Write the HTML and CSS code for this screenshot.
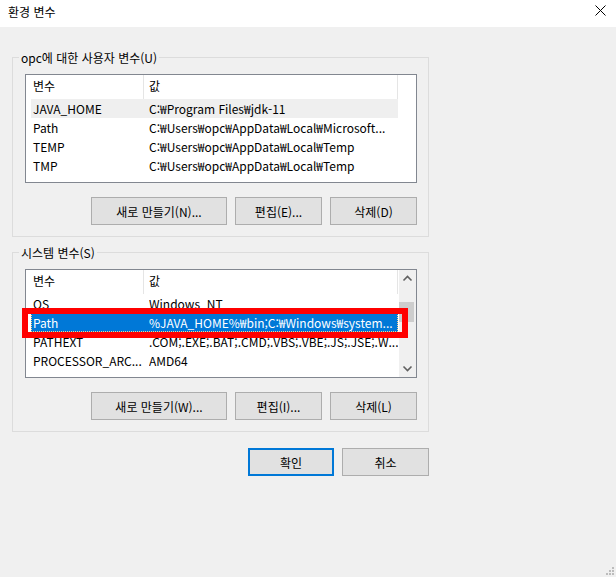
FILE: index.html
```html
<!DOCTYPE html>
<html lang="ko">
<head>
<meta charset="utf-8">
<title>환경 변수</title>
<link rel="stylesheet" href="styles.css">
</head>
<body>
<header class="titlebar">
  <span class="title">환경 변수</span>
  <svg class="close" width="11" height="11" viewBox="0 0 11 11"><path d="M0.5 0.5 L10.5 10.5 M10.5 0.5 L0.5 10.5" stroke="#000" stroke-width="1" fill="none"/></svg>
</header>
<main class="dialog">
  <section class="group">
    <div class="group-title">opc에 대한 사용자 변수(U)</div>
    <div class="listbox">
      <div class="list-main">
        <div class="list-header"><div class="h1">변수</div><div class="h2">값</div></div>
        <div class="row hover"><span class="c1">JAVA_HOME</span><span class="c2">C:₩Program Files₩jdk-11</span></div>
        <div class="row"><span class="c1">Path</span><span class="c2">C:₩Users₩opc₩AppData₩Local₩Microsoft...</span></div>
        <div class="row"><span class="c1">TEMP</span><span class="c2">C:₩Users₩opc₩AppData₩Local₩Temp</span></div>
        <div class="row"><span class="c1">TMP</span><span class="c2">C:₩Users₩opc₩AppData₩Local₩Temp</span></div>
      </div>
    </div>
    <div class="buttons">
      <button class="btn wide">새로 만들기(N)...</button>
      <button class="btn">편집(E)...</button>
      <button class="btn">삭제(D)</button>
    </div>
  </section>

  <section class="group second">
    <div class="group-title">시스템 변수(S)</div>
    <div class="listbox">
      <div class="list-main">
        <div class="list-header"><div class="h1">변수</div><div class="h2">값</div></div>
        <div class="row"><span class="c1">OS</span><span class="c2">Windows_NT</span></div>
        <div class="row selected"><span class="c1">Path</span><span class="c2">%JAVA_HOME%₩bin;C:₩Windows₩system...</span></div>
        <div class="row"><span class="c1">PATHEXT</span><span class="c2">.COM;.EXE;.BAT;.CMD;.VBS;.VBE;.JS;.JSE;.W...</span></div>
        <div class="row"><span class="c1">PROCESSOR_ARC...</span><span class="c2">AMD64</span></div>
        <div class="row"></div>
      </div>
      <div class="scrollbar">
        <div class="sb-btn"><svg width="17" height="17" viewBox="0 0 17 17"><path d="M4.5 10.5 L8.5 6.5 L12.5 10.5" stroke="#606060" stroke-width="1.6" fill="none"/></svg></div>
        <div class="sb-track"><div class="sb-thumb"></div></div>
        <div class="sb-btn"><svg width="17" height="17" viewBox="0 0 17 17"><path d="M4.5 6.5 L8.5 10.5 L12.5 6.5" stroke="#606060" stroke-width="1.6" fill="none"/></svg></div>
      </div>
    </div>
    <div class="buttons">
      <button class="btn wide">새로 만들기(W)...</button>
      <button class="btn">편집(I)...</button>
      <button class="btn">삭제(L)</button>
    </div>
    <div class="annotation"></div>
  </section>

  <div class="dialog-buttons">
    <button class="btn default">확인</button>
    <button class="btn">취소</button>
  </div>
</main>
<svg class="grip" width="10" height="10" viewBox="0 0 10 10">
  <rect x="7" y="1" width="2" height="2" fill="#bcbcbc"/>
  <rect x="4" y="4" width="2" height="2" fill="#bcbcbc"/>
  <rect x="7" y="4" width="2" height="2" fill="#bcbcbc"/>
  <rect x="1" y="7" width="2" height="2" fill="#bcbcbc"/>
  <rect x="4" y="7" width="2" height="2" fill="#bcbcbc"/>
  <rect x="7" y="7" width="2" height="2" fill="#bcbcbc"/>
</svg>
</body>
</html>
```

FILE: styles.css
```css
* { box-sizing: border-box; }
html, body { margin: 0; padding: 0; }
body {
  background: #f0f0f0;
  min-height: 100vh;
  font-family: "Noto Sans CJK KR", "Noto Sans", sans-serif;
  font-size: 12px;
  color: #000;
  position: relative;
}
.titlebar {
  height: 27px;
  background: #fff;
  display: flex;
  align-items: center;
  justify-content: space-between;
  padding: 0 10px 3px 8px;
}
.title { font-size: 12px; line-height: 16px; }
.close { align-self: flex-start; margin-top: 5px; }

.dialog {
  width: 429px;
  padding: 30px 0 0 12px;
  display: flex;
  flex-direction: column;
}
.group {
  position: relative;
  width: 417px;
  border: 1px solid #dcdcdc;
  padding: 0 11px 11px 12px;
  display: flex;
  flex-direction: column;
}
.group.second { margin-top: 15px; }
.group-title {
  align-self: flex-start;
  height: 16px;
  line-height: 16px;
  margin: -8px 0 0 -6px;
  padding: 0 2px;
  background: #f0f0f0;
  white-space: nowrap;
}
.listbox {
  margin-top: 8px;
  height: 109px;
  border: 1px solid #828790;
  background: #fff;
  display: flex;
  overflow: hidden;
}
.list-main { flex: 1; overflow: hidden; }
.list-header { display: flex; height: 24px; line-height: 22px; }
.h1 { width: 118px; padding-left: 7px; border-right: 1px solid #e5e5e5; }
.h2 { width: 254px; padding-left: 5px; border-right: 1px solid #e5e5e5; }
.row {
  display: flex;
  height: 19px;
  line-height: 19px;
  margin-left: 5px;
  width: 367px;
  white-space: nowrap;
  overflow: hidden;
}
.row.hover { background: #efefef; }
.row.selected {
  background: #0078d7;
  color: #fff;
  outline: 1px dotted #ffcf8a;
  outline-offset: -1px;
}
.c1 { width: 118px; flex: none; padding-left: 2px; overflow: hidden; }
.c2 { flex: 1; overflow: hidden; }

.scrollbar {
  width: 17px;
  flex: none;
  background: #f0f0f0;
  display: flex;
  flex-direction: column;
}
.sb-btn { height: 17px; flex: none; }
.sb-btn svg { display: block; }
.sb-track { flex: 1; }
.sb-thumb { margin-top: 15px; height: 20px; width: 15px; background: #cdcdcd; }

.buttons {
  margin-top: 14px;
  display: flex;
  justify-content: flex-end;
  gap: 8px;
}
.btn {
  height: 28px;
  width: 87px;
  border: 1px solid #adadad;
  background: #e1e1e1;
  font-family: inherit;
  font-size: 12px;
  color: #000;
  padding: 0;
  margin: 0;
}
.btn.wide { width: 136px; }
.btn.default { border: 2px solid #0078d7; width: 86px; }

.dialog-buttons {
  margin-top: 16px;
  width: 417px;
  display: flex;
  justify-content: flex-end;
  gap: 8px;
}

.annotation {
  position: absolute;
  left: 9px;
  top: 55px;
  width: 386px;
  height: 30px;
  border: 6px solid #ff0000;
}
.grip { position: absolute; right: 1px; bottom: 1px; }
```
